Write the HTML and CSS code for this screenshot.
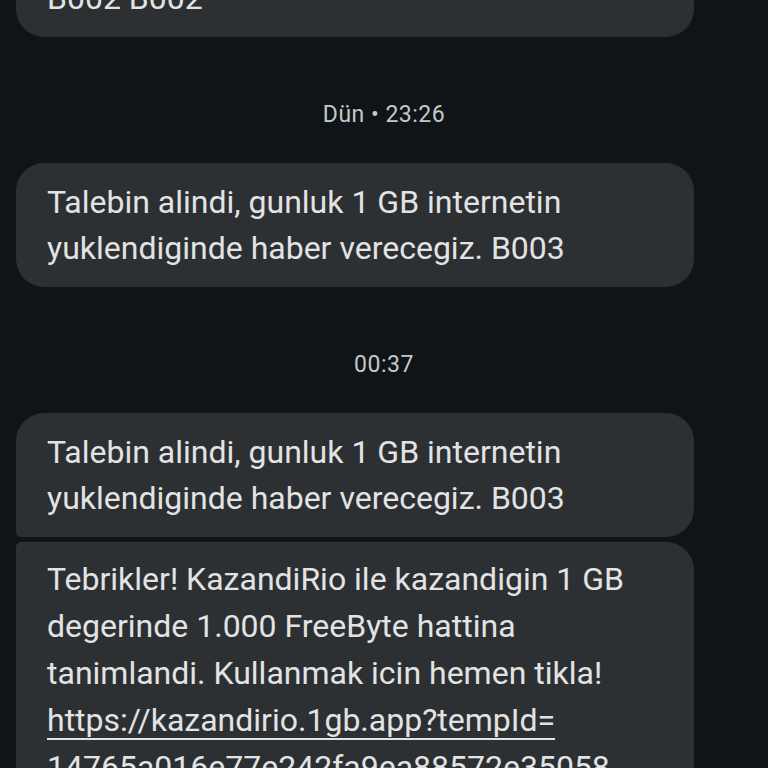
FILE: index.html
```html
<!DOCTYPE html>
<html lang="tr">
<head>
    <meta charset="UTF-8">
    <meta name="viewport" content="width=device-width, initial-scale=1.0">
    <title>Mesajlar</title>
    <link rel="stylesheet" href="styles.css">
</head>
<body>
    <div class="thread">
        <div class="bubble first">
            <p>B002 B002</p>
            <p>B002 B002</p>
        </div>

        <div class="stamp">Dün • 23:26</div>
        <div class="bubble">
            <p>Talebin alindi, gunluk 1 GB internetin yuklendiginde haber verecegiz. B003</p>
        </div>

        <div class="stamp">00:37</div>
        <div class="group">
            <div class="bubble top">
                <p>Talebin alindi, gunluk 1 GB internetin yuklendiginde haber verecegiz. B003</p>
            </div>
            <div class="bubble bottom">
                <p>Tebrikler! KazandiRio ile kazandigin 1 GB degerinde 1.000 FreeByte hattina tanimlandi. Kullanmak icin hemen tikla! <a href="#">https://kazandirio.1gb.app?tempId=<br>14765a016e77e242fa9ea88572e35058</a></p>
            </div>
        </div>
    </div>
</body>
</html>
```

FILE: styles.css
```css
html, body {
    height: 100%;
}
body {
    margin: 0;
    background-color: #0e1417;
    color: #e3e3e3;
    font-family: Roboto, "Noto Sans", sans-serif;
    overflow: hidden;
}
.thread {
    display: flex;
    flex-direction: column;
    padding: 0 16px;
}
.bubble {
    background-color: #2c3033;
    border-radius: 28px;
    padding: 16px 40px 16px 31px;
    margin-right: 58px;
}
.bubble p {
    margin: 0;
    font-size: 32px;
    line-height: 46px;
}
.bubble a {
    color: #e3e3e3;
    text-decoration: underline;
    text-underline-offset: 7px;
    text-decoration-thickness: 2px;
}
.first {
    margin-top: -87px;
}
.stamp {
    text-align: center;
    font-size: 23px;
    line-height: 28px;
    letter-spacing: 0.5px;
    color: #c6c8c8;
    padding: 64px 0 34px;
}
.group {
    display: flex;
    flex-direction: column;
    gap: 5px;
}
.bubble.top {
    border-bottom-left-radius: 5px;
}
.bubble.bottom {
    border-top-left-radius: 5px;
    padding-top: 14px;
}
.bubble.bottom p {
    line-height: 47px;
}
```
